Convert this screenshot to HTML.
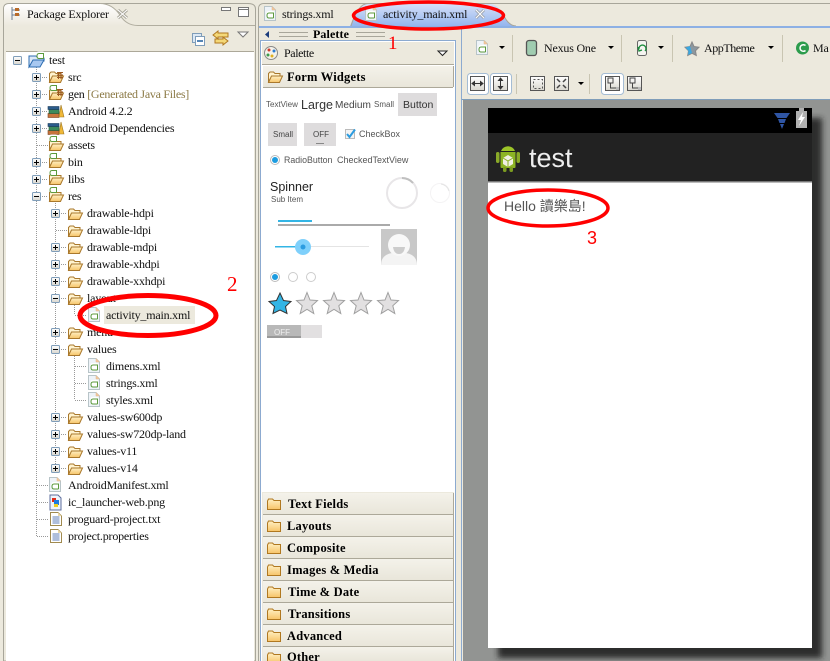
<!DOCTYPE html>
<html><head><meta charset="utf-8"><style>
html,body{margin:0;padding:0;background:#ece9dd;width:830px;height:661px;overflow:hidden}
svg{display:block;position:absolute;left:0;top:0}
text{font-family:"Liberation Serif","Noto Serif CJK SC",serif;font-size:12px;fill:#111;letter-spacing:-.2px}
.s{font-family:"Liberation Sans","Noto Sans CJK TC",sans-serif;fill:#555;letter-spacing:0}
.b{font-weight:bold;font-size:12.5px;letter-spacing:.2px;fill:#000}
</style></head><body>
<svg width="830" height="661" viewBox="0 0 830 661" xmlns="http://www.w3.org/2000/svg">
<defs>
<linearGradient id="tab" x1="0" y1="0" x2="0" y2="1"><stop offset="0" stop-color="#fff"/><stop offset="1" stop-color="#ece9dd"/></linearGradient>
<linearGradient id="blue" x1="0" y1="0" x2="0" y2="1"><stop offset="0" stop-color="#d5e0f8"/><stop offset="1" stop-color="#94b5ee"/></linearGradient>
<linearGradient id="hdr" x1="0" y1="0" x2="0" y2="1"><stop offset="0" stop-color="#f4f2ea"/><stop offset="1" stop-color="#e9e6da"/></linearGradient>
<linearGradient id="fo" x1="0" y1="0" x2="0" y2="1"><stop offset="0" stop-color="#fff0c4"/><stop offset="1" stop-color="#f7c468"/></linearGradient>
<linearGradient id="btn" x1="0" y1="0" x2="0" y2="1"><stop offset="0" stop-color="#fff"/><stop offset="1" stop-color="#d8d6ce"/></linearGradient>
<filter id="blur" x="-10%" y="-10%" width="120%" height="120%"><feGaussianBlur stdDeviation="3"/></filter>
<symbol id="fld" width="16" height="14" overflow="visible"><path d="M1.500 11.500V3.500L3 2H6.500L8 3.500H13V6H5L1.500 11.500Z" fill="#fff3cf" stroke="#a9782c"/><path d="M1.500 12.500L4.500 6H15.500L12.500 12.500Z" fill="url(#fo)" stroke="#a9782c"/></symbol>
<symbol id="a" width="9" height="9" overflow="visible"><rect x=".5" y=".5" width="8" height="7" rx="2" fill="#fff"/><path d="M7.500 7.500H3Q1 7.500 1 5Q1 2.500 3 2.500H7.500V7.500" fill="none" stroke="#5c9a3c"/></symbol>
<symbol id="pf" width="16" height="16" overflow="visible"><use href="#fld" y="2"/><use href="#a" x="1" y="-2"/></symbol>
<symbol id="pk" width="8" height="8" overflow="visible"><path d="M1 .5H7M1 3H7M1 5.500H7M2.500 0V7M5 0V7" stroke="#9c5a22" fill="none"/></symbol>
<symbol id="lib" width="16" height="13" overflow="visible"><rect x="0" y="8.500" width="11" height="4" fill="#c8743c" stroke="#7a4420" stroke-width=".6"/><rect x="1" y="4.500" width="10" height="4" fill="#3c8a5c" stroke="#245c3c" stroke-width=".6"/><rect x="0" y="1.500" width="11" height="3" fill="#2c5c8c" stroke="#1c3c5c" stroke-width=".6"/><path d="M11 12L13 0L16 12Z" fill="#f0b838" stroke="#a07820" stroke-width=".6"/></symbol>
<symbol id="pl" width="9" height="9" overflow="visible"><rect x=".5" y=".5" width="8" height="8" rx="1" fill="url(#btn)" stroke="#7f9db9"/><path d="M2 4.500H7M4.500 2V7" stroke="#000"/></symbol>
<symbol id="mi" width="9" height="9" overflow="visible"><rect x=".5" y=".5" width="8" height="8" rx="1" fill="url(#btn)" stroke="#7f9db9"/><path d="M2 4.500H7" stroke="#000"/></symbol>
<symbol id="xf" width="12" height="15" overflow="visible"><path d="M.5 .5H8L11.500 4V14.500H.5Z" fill="#eef3f8" stroke="#b8c4c8"/><path d="M8 .5V4H11.500Z" fill="#f4c89c" stroke="#e0b890" stroke-width=".5"/><use href="#a" x="2" y="4.500"/></symbol>
<symbol id="tf" width="12" height="14" overflow="visible"><path d="M.5 .5H8L11.500 4V13.500H.5Z" fill="#fff" stroke="#a08a50"/><path d="M8 .5V4H11.500Z" fill="#ecd9a8"/><path d="M2.500 5H9.500M2.500 7H9.500M2.500 9H9.500M2.500 11H9.500" stroke="#5c7cb8"/></symbol>
<symbol id="cf" width="14" height="12" overflow="visible"><path d="M.5 3V11.500H13.500V2.500H7L5.500 1H1.500Z" fill="url(#fo)" stroke="#b07820"/></symbol>
<symbol id="star" width="24" height="24" overflow="visible"><polygon points="12,1.500 15,9 22.500,9.500 16.800,14.800 18.800,22.500 12,18.300 5.200,22.500 7.200,14.800 1.500,9.500 9,9" fill="#e2e0e1" stroke="#a0a0a0"/></symbol>
<symbol id="tb" width="15" height="15" overflow="visible"><rect x=".5" y=".5" width="14" height="14" fill="url(#btn)" stroke="#555"/></symbol>
</defs>

<!-- Package Explorer -->
<path d="M3.500 661V9Q3.500 3.500 9 3.500H248Q255.500 3.500 255.500 9V661Z" fill="#ece9dd" stroke="#a8a69a"/>
<path d="M4 26V9Q4 4 9 4H100Q112 4 120 15Q126 25 138 25.500H4Z" fill="url(#tab)"/>
<path d="M100 3.500Q112 3.500 120 15Q126 25.500 138 25.500H255" fill="none" stroke="#b0ad9f"/>
<rect x="6" y="52" width="248" height="609" fill="#fff"/>
<path d="M6 51.500H254" stroke="#aca899"/>
<path d="M12 7V20M12 10H20M12 15H20" stroke="#6c7c90" fill="none"/><rect x="15" y="8" width="4" height="3" fill="#b86a28"/><rect x="15" y="13" width="4" height="3" fill="#b86a28"/>
<text x="27" y="18">Package Explorer</text>
<path d="M118 10L127 18M127 10L118 18" stroke="#a8a69a" stroke-width="3"/><path d="M118 10L127 18M127 10L118 18" stroke="#fff"/>
<rect x="221.500" y="7.500" width="9" height="3" fill="#fff" stroke="#777"/>
<rect x="238.500" y="7.500" width="10" height="9" fill="#fff" stroke="#777"/><path d="M238.500 9.500H248.500" stroke="#777"/>
<rect x="192.500" y="33.500" width="9" height="9" fill="#dce8f4" stroke="#7f9db9"/><rect x="195.500" y="36.500" width="9" height="9" fill="#fff" stroke="#7f9db9"/><path d="M197 41H203" stroke="#1c5c9c" stroke-width="1.500"/>
<path d="M213 35L218 31V33H228V37H218V39ZM228 41L223 37V39H215V43H223V45Z" fill="#f4d878" stroke="#b07820"/>
<path d="M238 32H248L243 37Z" fill="#fff" stroke="#777"/>

<!-- tree lines -->
<g stroke="#999" stroke-dasharray="1 1" fill="none">
<path d="M36.500 67V536.500M55.500 203V468M74.500 305V315M74.500 356V400"/>
<path d="M40 77.500H48M40 94.500H48M40 111.500H48M40 128.500H48M37 145.500H48M40 162.500H48M40 179.500H48M40 196.500H48M37 485.500H48M37 502.500H48M37 519.500H48M37 536.500H48"/>
<path d="M59 213.500H67M56 230.500H67M59 247.500H67M59 264.500H67M59 281.500H67M59 298.500H67M59 332.500H67M59 349.500H67M59 417.500H67M59 434.500H67M59 451.500H67M59 468.500H67"/>
<path d="M75 315.500H87M75 366.500H87M75 383.500H87M75 400.500H87"/>
</g>
<rect x="104" y="306" width="91" height="18" fill="#ece9dd"/>

<!-- tree boxes -->
<use href="#mi" x="13" y="56"/>
<use href="#pl" x="32" y="73"/><use href="#pl" x="32" y="90"/><use href="#pl" x="32" y="107"/><use href="#pl" x="32" y="124"/><use href="#pl" x="32" y="158"/><use href="#pl" x="32" y="175"/><use href="#mi" x="32" y="192"/>
<use href="#pl" x="51" y="209"/><use href="#pl" x="51" y="243"/><use href="#pl" x="51" y="260"/><use href="#pl" x="51" y="277"/><use href="#mi" x="51" y="294"/><use href="#pl" x="51" y="328"/><use href="#mi" x="51" y="345"/><use href="#pl" x="51" y="413"/><use href="#pl" x="51" y="430"/><use href="#pl" x="51" y="447"/><use href="#pl" x="51" y="464"/>

<!-- tree icons -->
<path d="M29 56H36L38 58H44V61H33L29 67Z" fill="#dce8f8" stroke="#2c6cb0"/><path d="M29 67L33 60H44L40 67Z" fill="#a8c8f0" stroke="#2c6cb0"/><use href="#a" x="36" y="51"/>
<use href="#fld" x="48" y="70"/><use href="#pk" x="56" y="72"/>
<use href="#pf" x="48" y="85"/><use href="#pk" x="56" y="89"/>
<use href="#lib" x="48" y="105"/><use href="#lib" x="48" y="122"/>
<use href="#pf" x="48" y="136"/><use href="#pf" x="48" y="153"/><use href="#pf" x="48" y="170"/><use href="#pf" x="48" y="187"/>
<use href="#fld" x="67" y="207"/><use href="#fld" x="67" y="224"/><use href="#fld" x="67" y="241"/><use href="#fld" x="67" y="258"/><use href="#fld" x="67" y="275"/><use href="#fld" x="67" y="292"/><use href="#fld" x="67" y="326"/><use href="#fld" x="67" y="343"/>
<use href="#xf" x="88" y="307"/><use href="#xf" x="88" y="358"/><use href="#xf" x="88" y="375"/><use href="#xf" x="88" y="392"/>
<use href="#fld" x="67" y="411"/><use href="#fld" x="67" y="428"/><use href="#fld" x="67" y="445"/><use href="#fld" x="67" y="462"/>
<use href="#xf" x="49" y="477"/>
<path d="M50 495H58L61 498V510H50Z" fill="#eef4fc" stroke="#5c6c9c"/><rect x="52" y="498" width="4" height="4" fill="#e02c1c"/><rect x="54" y="500" width="5" height="5" fill="#1c7ce0"/><rect x="54" y="504" width="4" height="3" fill="#f0d020"/>
<use href="#tf" x="50" y="512"/><use href="#tf" x="50" y="529"/>

<!-- tree text -->
<text x="49" y="64">test</text>
<text x="68" y="81">src</text>
<text x="68" y="98" style="letter-spacing:-.28px">gen <tspan fill="#8c7a46">[Generated Java Files]</tspan></text>
<text x="68" y="115">Android 4.2.2</text>
<text x="68" y="132">Android Dependencies</text>
<text x="68" y="149">assets</text>
<text x="68" y="166">bin</text>
<text x="68" y="183">libs</text>
<text x="68" y="200">res</text>
<text x="87" y="217">drawable-hdpi</text>
<text x="87" y="234">drawable-ldpi</text>
<text x="87" y="251">drawable-mdpi</text>
<text x="87" y="268">drawable-xhdpi</text>
<text x="87" y="285">drawable-xxhdpi</text>
<text x="87" y="302">layout</text>
<text x="106" y="319">activity_main.xml</text>
<text x="87" y="336">menu</text>
<text x="87" y="353">values</text>
<text x="106" y="370">dimens.xml</text>
<text x="106" y="387">strings.xml</text>
<text x="106" y="404">styles.xml</text>
<text x="87" y="421">values-sw600dp</text>
<text x="87" y="438">values-sw720dp-land</text>
<text x="87" y="455">values-v11</text>
<text x="87" y="472">values-v14</text>
<text x="68" y="489">AndroidManifest.xml</text>
<text x="68" y="506">ic_launcher-web.png</text>
<text x="68" y="523">proguard-project.txt</text>
<text x="68" y="540">project.properties</text>

<!-- Editor tabs -->
<path d="M258.500 661V9Q258.500 3.500 264 3.500H830" fill="none" stroke="#a8a69a"/>
<path d="M259 26V9Q259 4 264 4H358V26Z" fill="#ece9dd"/>
<path d="M350 26Q358 4 368 4H490Q498 4 504 16Q509 26 516 26Z" fill="url(#blue)"/>
<path d="M351 26Q358 3.500 368 3.500" fill="none" stroke="#a8a69a"/>
<path d="M504 16Q509 26 516 26" fill="none" stroke="#a8a69a"/>
<rect x="259" y="26" width="571" height="2" fill="#8db0e4"/>
<use href="#xf" x="264" y="6"/><text x="282" y="18">strings.xml</text>
<use href="#xf" x="365" y="6"/><text x="383" y="18">activity_main.xml</text>
<path d="M476 10L484 18M484 10L476 18" stroke="#9fa6b0" stroke-width="3"/><path d="M476 10L484 18M484 10L476 18" stroke="#fff"/>

<!-- Palette -->
<rect x="259" y="28" width="203" height="633" fill="#ece9dd"/>
<path d="M269 31V38L265 34.500Z" fill="#1c3c7c"/>
<path d="M279 32.500H308M279 36.500H308M356 32.500H385M356 36.500H385" stroke="#a8a69a"/>
<text x="313" y="38" class="b" style="font-size:12px;letter-spacing:.1px">Palette</text>
<rect x="260.500" y="40.500" width="195" height="630" fill="#fff" stroke="#8caad0"/>
<rect x="262" y="42" width="192" height="22" fill="#ece9dd"/><path d="M262 64.500H454" stroke="#aca899"/>
<circle cx="271" cy="53" r="6.500" fill="#f4f2ea" stroke="#888"/><circle cx="269" cy="50" r="1.500" fill="#d03c2c"/><circle cx="274" cy="51" r="1.500" fill="#2c7cd0"/><circle cx="272" cy="56" r="1.500" fill="#e0b020"/><circle cx="268" cy="55" r="1.500" fill="#3c9c4c"/>
<text x="284" y="57" style="letter-spacing:-.4px">Palette</text>
<path d="M438 51H447L442.500 55.500Z" fill="#fff" stroke="#222"/>
<rect x="263" y="66" width="190" height="21" fill="url(#hdr)"/><path d="M263 87.500H453M453.500 66V87" stroke="#aca899"/>
<use href="#fld" x="267" y="70"/><text x="287" y="81" class="b">Form Widgets</text>

<!-- widgets -->
<text class="s" x="266" y="107" style="font-size:8px">TextView</text>
<text class="s" x="301" y="109" style="font-size:12.500px;fill:#333">Large</text>
<text class="s" x="335" y="108" style="font-size:10.100px;fill:#444">Medium</text>
<text class="s" x="374" y="107" style="font-size:8px">Small</text>
<rect x="398" y="93" width="39" height="23" fill="#dedcdd"/><text class="s" x="403" y="108" style="font-size:10.500px;fill:#333">Button</text>
<rect x="268" y="123" width="29" height="23" fill="#dedcdd"/><text class="s" x="273" y="137" style="font-size:8px;fill:#444">Small</text>
<rect x="304" y="123" width="32" height="23" fill="#dedcdd"/><text class="s" x="313" y="137" style="font-size:8px;fill:#444">OFF</text><rect x="316" y="143" width="8" height="1" fill="#888"/>
<rect x="345.500" y="129.500" width="9" height="9" fill="#f4f4f4" stroke="#bbb"/><path d="M347 134L349.500 137L355 129.500" fill="none" stroke="#2c9ce0" stroke-width="2"/>
<text class="s" x="359" y="137" style="font-size:9px">CheckBox</text>
<circle cx="275" cy="160" r="4.500" fill="#fff" stroke="#bbb"/><circle cx="275" cy="160" r="3" fill="#1c9ce0"/>
<text class="s" x="284" y="163" style="font-size:8.800px">RadioButton</text><text class="s" x="337" y="163" style="font-size:9px">CheckedTextView</text>
<text class="s" x="270" y="191" style="font-size:12.500px;fill:#222">Spinner</text>
<text class="s" x="271" y="202" style="font-size:8px">Sub Item</text>
<circle cx="402" cy="193" r="15" fill="none" stroke="#e8e6e8" stroke-width="2"/><path d="M402 178A15 15 0 0 1 413 183" fill="none" stroke="#c0c0c0" stroke-width="2"/>
<circle cx="440" cy="193" r="9.500" fill="none" stroke="#f4f3f4" stroke-width="1"/><path d="M441 184A9.500 9.500 0 0 1 449 191" fill="none" stroke="#e4e4e4" stroke-width="1"/>
<rect x="278" y="220" width="34" height="2" fill="#33b5e5"/><rect x="278" y="224" width="112" height="2" fill="#aaa"/>
<rect x="275" y="246" width="94" height="1" fill="#e4e4e4"/><rect x="275" y="246" width="28" height="1.500" fill="#33b5e5"/>
<circle cx="303" cy="247" r="8" fill="#7fd0fb"/><circle cx="303" cy="247" r="2.500" fill="#2c9ce0"/>
<rect x="381" y="229" width="36" height="36" fill="#c8c8c8"/>
<path d="M381 265Q381 255 392 253H406Q417 255 417 265Z" fill="#f4f4f4"/><circle cx="399" cy="245" r="11" fill="#f8f8f8"/><path d="M393 247H405Q404 254 399 254Q394 254 393 247Z" fill="#ccc"/>
<circle cx="275" cy="277" r="4.500" fill="#fff" stroke="#bbb"/><circle cx="275" cy="277" r="3" fill="#1c9ce0"/>
<circle cx="293" cy="277" r="4.500" fill="#fff" stroke="#ccc"/><circle cx="311" cy="277" r="4.500" fill="#fff" stroke="#ccc"/>
<polygon points="280,293 283.500,300.500 291,301.500 285.500,306.500 287,313.500 280,310 273,313.500 274.500,306.500 269,301.500 276.500,300.500" fill="#33b5e5" stroke="#333"/>
<use href="#star" x="295" y="291"/><use href="#star" x="322" y="291"/><use href="#star" x="349" y="291"/><use href="#star" x="376" y="291"/>
<rect x="267" y="325" width="55" height="13" fill="#e2e0e1"/><rect x="267" y="325" width="34" height="13" fill="#b8b8b8"/><rect x="267" y="336" width="34" height="2" fill="#999"/>
<text class="s" x="274" y="335" style="font-size:8px;fill:#eee">OFF</text>

<!-- Palette drawers -->
<rect x="262" y="492" width="192" height="170" fill="#ece9dd"/>
<g fill="url(#hdr)">
<rect x="263" y="493" width="190" height="21"/><rect x="263" y="515" width="190" height="21"/><rect x="263" y="537" width="190" height="21"/><rect x="263" y="559" width="190" height="21"/><rect x="263" y="581" width="190" height="21"/><rect x="263" y="603" width="190" height="21"/><rect x="263" y="625" width="190" height="21"/><rect x="263" y="647" width="190" height="14"/>
</g>
<path d="M263 514.500H453M263 536.500H453M263 558.500H453M263 580.500H453M263 602.500H453M263 624.500H453M263 646.500H453M453.500 493V661" stroke="#aca899"/>
<use href="#cf" x="267" y="498"/><use href="#cf" x="267" y="520"/><use href="#cf" x="267" y="542"/><use href="#cf" x="267" y="564"/><use href="#cf" x="267" y="586"/><use href="#cf" x="267" y="608"/><use href="#cf" x="267" y="630"/><use href="#cf" x="267" y="652"/>
<text x="288" y="508" class="b">Text Fields</text>
<text x="287" y="530" class="b">Layouts</text>
<text x="287" y="552" class="b">Composite</text>
<text x="287" y="574" class="b">Images &amp; Media</text>
<text x="288" y="596" class="b">Time &amp; Date</text>
<text x="288" y="618" class="b">Transitions</text>
<text x="287" y="640" class="b">Advanced</text>
<text x="287" y="661" class="b">Other</text>

<!-- Toolbar -->
<rect x="461" y="28" width="369" height="72" fill="#ece9dd"/>
<path d="M461.500 28V661" stroke="#8caad0"/>
<path d="M512.500 35V62M621.500 35V62M672.500 35V62M782.500 35V62M516.500 74V94M589.500 74V94" stroke="#c9c5b2"/>
<use href="#xf" x="476" y="40"/>
<path d="M499 46H505L502 49Z" fill="#000"/>
<rect x="526.500" y="40.500" width="10" height="15" rx="2.500" fill="#a0ccb0" stroke="#555" stroke-width="1.300"/>
<text x="544" y="52">Nexus One</text>
<path d="M608 46H614L611 49Z" fill="#000"/>
<rect x="637.500" y="40.500" width="9" height="15" rx="2" fill="#f4f4f0" stroke="#666"/><path d="M639 49A3.500 3.500 0 1 1 645 51M638 47L639 51L642 50" fill="none" stroke="#1c8c3c" stroke-width="1.300"/>
<path d="M658 46H664L661 49Z" fill="#000"/>
<polygon points="692,42 694,46.500 699,47.200 695.500,50.800 696.300,55.500 692,53.300 687.700,55.500 688.500,50.800 685,47.200 690,46.500" fill="#8c98a0" stroke="#888"/><polygon points="690,46 692,53 688,55 688.500,51 685.500,47.500" fill="#3ca8e0"/>
<text x="704" y="52" style="letter-spacing:-.45px">AppTheme</text>
<path d="M768 46H774L771 49Z" fill="#000"/>
<circle cx="802.500" cy="48" r="6.500" fill="#2c9c4c"/><path d="M805.500 45.500A3.300 3.300 0 1 0 805.500 50.500" fill="none" stroke="#fff" stroke-width="1.500"/>
<text x="813" y="52">Ma</text>
<rect x="467.500" y="73.500" width="21" height="21" rx="3" fill="#fff" stroke="#a4bcd4"/><rect x="490.500" y="73.500" width="21" height="21" rx="3" fill="#fff" stroke="#a4bcd4"/><rect x="601.500" y="73.500" width="22" height="21" rx="3" fill="#fff" stroke="#a4bcd4"/>
<use href="#tb" x="470" y="76"/><use href="#tb" x="493" y="76"/><use href="#tb" x="530" y="76"/><use href="#tb" x="554" y="76"/><use href="#tb" x="605" y="76"/><use href="#tb" x="627" y="76"/>
<path d="M472 83.500H483M472 83.500L474.500 81.500V85.500ZM483 83.500L480.500 81.500V85.500ZM500.500 78V89M500.500 78L498.500 80.500H502.500ZM500.500 89L498.500 86.500H502.500Z" stroke="#333" fill="#333"/>
<rect x="533.500" y="79.500" width="9" height="9" fill="none" stroke="#555" stroke-dasharray="2 2"/>
<path d="M557 79L560 82M566 79L563 82M557 88L560 85M566 88L563 85" stroke="#444" stroke-width="1.500"/>
<path d="M578 82H584L581 85Z" fill="#000"/>
<path d="M608 78H613V83H608ZM610.500 83V88H616" fill="none" stroke="#444"/><rect x="616" y="87" width="3" height="3" fill="#bbb"/>
<path d="M630 78H635V83H630ZM632.500 83V88H638" fill="none" stroke="#444"/><rect x="638" y="87" width="3" height="3" fill="#bbb"/>

<!-- Canvas -->
<rect x="463" y="100" width="367" height="561" fill="#929492"/>
<path d="M462 99.500H830" stroke="#7f9db9"/>
<rect x="498" y="118" width="324" height="540" fill="#222" opacity=".9" filter="url(#blur)"/>
<rect x="488" y="108" width="324" height="540" fill="#fff"/>
<rect x="488" y="108" width="324" height="25" fill="#000"/>
<rect x="488" y="133" width="324" height="48" fill="#222"/>
<rect x="488" y="181" width="324" height="1.500" fill="#777"/>
<path d="M774 113H790L786.500 118H777.500ZM778 119H786L784.500 123H779.500ZM780 124H784L782 129Z" fill="#2f55a4"/>
<rect x="796" y="111" width="11" height="17" fill="#b0b0b0"/><rect x="799" y="108" width="5" height="3" fill="#b0b0b0"/><path d="M803 112L798 120H801L799 126L805 117H802Z" fill="#fff"/>
<!-- android -->
<rect x="496" y="152" width="3.500" height="11" rx="1.700" fill="#8aaa28"/><rect x="516.500" y="152" width="3.500" height="11" rx="1.700" fill="#8aaa28"/>
<path d="M501 151A7.500 7.500 0 0 1 515 151Z" fill="#9cc428"/>
<path d="M500.500 152H515.500V167Q515.500 168 514 168H502Q500.500 168 500.500 167Z" fill="#8cb424"/>
<rect x="503" y="167" width="3.500" height="5" rx="1.500" fill="#7c9c20"/><rect x="509.500" y="167" width="3.500" height="5" rx="1.500" fill="#7c9c20"/>
<path d="M508 155L513 158V164L508 167L503 164V158Z" fill="#f0f0e4"/><path d="M503 158L508 161L513 158M508 161V167" fill="none" stroke="#8cb424"/>
<text class="s" x="529" y="167" style="font-size:27px;fill:#eee">test</text>
<text class="s" x="504" y="211" style="font-size:14px;fill:#555">Hello 讀樂島!</text>

<!-- Annotations -->
<g fill="none" stroke="#f00">
<ellipse cx="428.500" cy="15.500" rx="75" ry="13.500" stroke-width="3.500"/>
<ellipse cx="148" cy="315.500" rx="68" ry="20" stroke-width="5"/>
<ellipse cx="548" cy="208" rx="60" ry="18" stroke-width="3.500"/>
</g>
<text x="388" y="49" style="font-size:19px;fill:#f00">1</text>
<text x="227" y="291" style="font-size:21px;fill:#f00">2</text>
<text x="587" y="244" class="s" style="font-size:18px;fill:#f00">3</text>
</svg>
</body></html>
